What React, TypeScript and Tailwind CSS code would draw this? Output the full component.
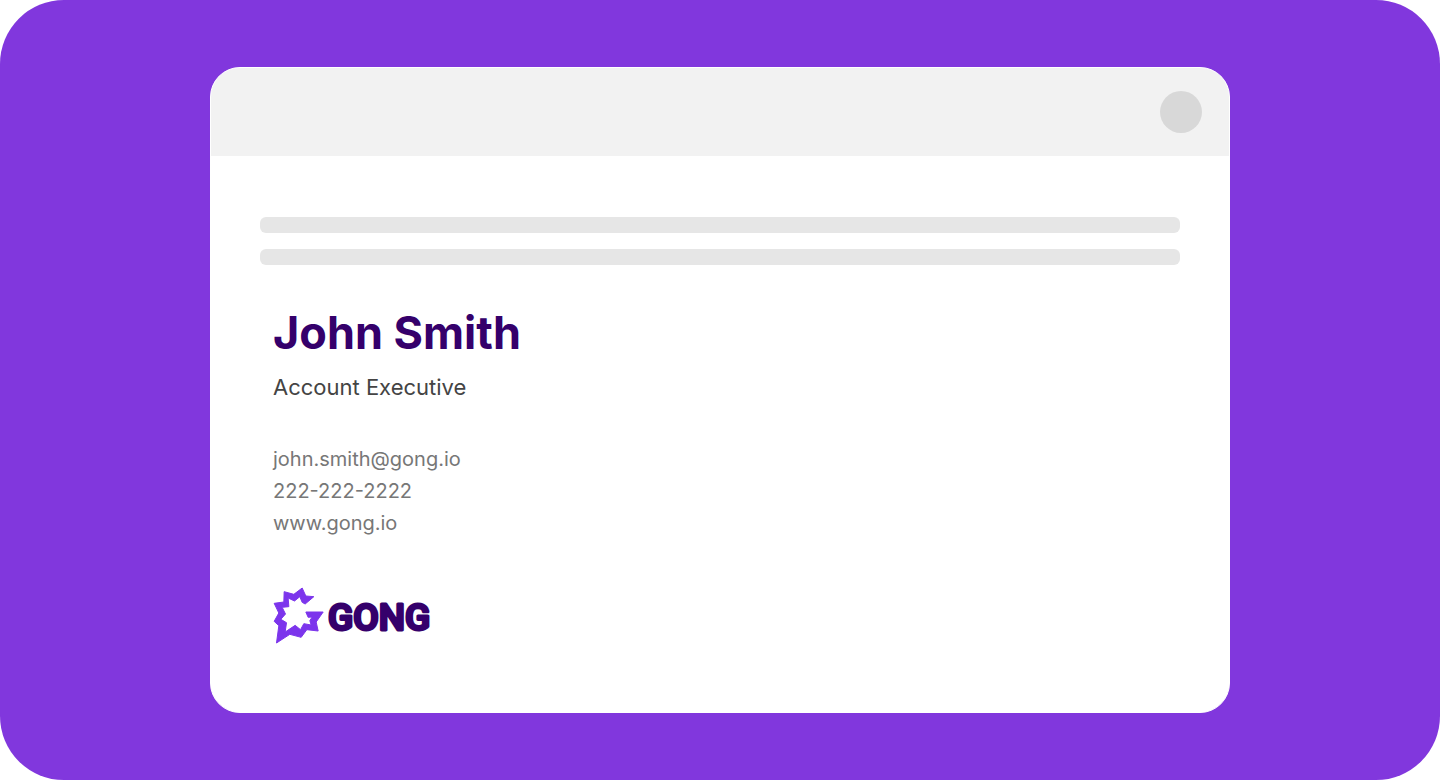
import {FC} from 'react';

const Burst: FC = () => (
  <svg
    viewBox="0 0 152 171"
    className="h-[57px] w-[51px]"
    fill="#7c35ec"
    stroke="#7c35ec"
    strokeWidth="3"
    strokeLinejoin="round"
    aria-hidden="true"
  >
    <path d="M122 29 98 27 87 3 62 22 33 14 32 45 3 49 17 78 3 103 17 116 10 168 50 142 84 151 101 128 135 132 129 105 150 75 98 75 105 91 117 90 110 101 114 114 92 110 82 128 66 115 36 135 40 107 23 97 37 81 27 61 47 59 45 33 64 42 80 29 87 46 96 51Z" />
  </svg>
);

const Logo: FC = () => (
  <a href="https://www.gong.io" aria-label="Gong" className="flex w-fit items-center gap-1">
    <Burst />
    <svg viewBox="0 0 108 52" className="h-[52px] w-[108px]">
      <text
        x="0"
        y="40"
        fontSize="37"
        fontWeight="500"
        fill="#35006b"
        stroke="#35006b"
        strokeWidth="3"
        strokeLinejoin="round"
        fontFamily="Roboto, sans-serif"
      >
        GONG
      </text>
    </svg>
  </a>
);

const Signature: FC = () => (
  <address className="px-[13px] not-italic">
    <h1 className="text-[45px] leading-14 font-bold text-[#35006b]">John Smith</h1>
    <p className="mt-2.5 text-[22px] leading-8 text-[#444444]">Account Executive</p>
    <ul className="mt-10 text-[20px] leading-8 text-[#777777]">
      <li>
        <a href="mailto:john.smith@gong.io">john.smith@gong.io</a>
      </li>
      <li>
        <a href="tel:2222222222">222-222-2222</a>
      </li>
      <li>
        <a href="https://www.gong.io">www.gong.io</a>
      </li>
    </ul>
    <div className="mt-12">
      <Logo />
    </div>
  </address>
);

export default function App() {
  return (
    <div className="bg-white font-['Inter',sans-serif]">
      <main className="flex min-h-screen flex-col items-center justify-center rounded-[64px] bg-[#8137dd] px-8 py-16">
        <article className="w-full max-w-[1020px] overflow-hidden rounded-[30px] border border-white bg-white">
          <header className="flex h-[88px] items-center justify-end bg-[#f2f2f2] px-[27px]">
            <div className="size-[42px] rounded-full bg-[#d8d8d8]" />
          </header>
          <div className="px-[49px] pt-[61px] pb-[68px]">
            <div className="mb-10 flex flex-col gap-4">
              <div className="h-4 rounded-md bg-[#e6e6e6]" />
              <div className="h-4 rounded-md bg-[#e6e6e6]" />
            </div>
            <Signature />
          </div>
        </article>
      </main>
    </div>
  );
}
